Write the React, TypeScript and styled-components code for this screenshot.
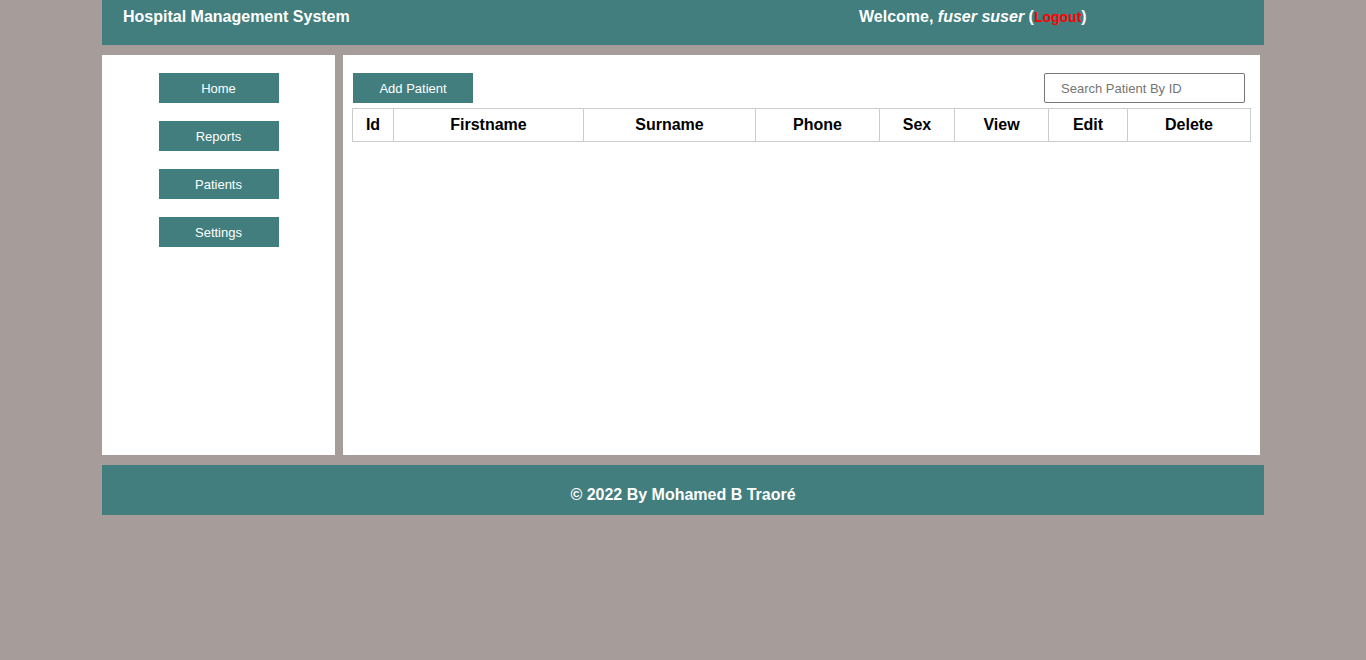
import React from "react";
import styled, { createGlobalStyle } from "styled-components";

const teal = "#417e7d";

const Global = createGlobalStyle`
  html, body {
    margin: 0;
    padding: 0;
    background: #a69d9b;
    font-family: "Liberation Sans", Arial, sans-serif;
  }
`;

const Page = styled.div`
  width: 1162px;
  margin: 0 auto;
  display: flex;
  flex-direction: column;
`;

const Header = styled.header`
  height: 45px;
  background: ${teal};
  display: grid;
  grid-template-columns: 736px 1fr;
  padding: 8px 21px 0;
  box-sizing: border-box;
  color: #fff;
  font-weight: bold;
  font-size: 16px;
  line-height: 18px;
`;

const Title = styled.div``;

const Welcome = styled.div`
  em {
    font-style: italic;
  }
`;

const Logout = styled.a`
  color: #ff0000;
  font-size: 14px;
  text-decoration: none;
`;

const Body = styled.div`
  display: flex;
  gap: 8px;
  margin-top: 10px;
  height: 400px;
`;

const Sidebar = styled.nav`
  width: 233px;
  background: #fff;
  display: flex;
  flex-direction: column;
  align-items: center;
  gap: 18px;
  padding-top: 18px;
  box-sizing: border-box;
`;

const TealButton = styled.button`
  width: 120px;
  height: 30px;
  border: none;
  background: ${teal};
  color: #fff;
  font-family: "Liberation Sans", Arial, sans-serif;
  font-size: 13px;
  padding: 0;
  cursor: pointer;
`;

const Main = styled.main`
  width: 917px;
  background: #fff;
  padding: 18px 9px;
  box-sizing: border-box;
`;

const Toolbar = styled.div`
  display: flex;
  justify-content: space-between;
  align-items: center;
  padding-left: 1px;
  padding-right: 6px;
  margin-bottom: 5px;
`;

const Search = styled.input`
  width: 201px;
  height: 30px;
  box-sizing: border-box;
  border: 1px solid #767676;
  border-radius: 2px;
  padding: 0 16px;
  font-family: "Liberation Sans", Arial, sans-serif;
  font-size: 13px;
  color: #333;
  &::placeholder {
    color: #757575;
  }
`;

const Table = styled.table`
  width: 898px;
  border-collapse: collapse;
  table-layout: fixed;
`;

const Th = styled.th`
  border: 1px solid #ccc;
  height: 33px;
  box-sizing: border-box;
  padding: 0;
  font-size: 16px;
  font-weight: bold;
  color: #000;
  text-align: center;
`;

const Footer = styled.footer`
  margin-top: 10px;
  height: 50px;
  background: ${teal};
  color: #fff;
  font-weight: bold;
  font-size: 16px;
  text-align: center;
  line-height: 18px;
  padding-top: 21px;
  box-sizing: border-box;
`;

const columns: [string, number][] = [
  ["Id", 41],
  ["Firstname", 190],
  ["Surname", 172],
  ["Phone", 124],
  ["Sex", 75],
  ["View", 94],
  ["Edit", 79],
  ["Delete", 123],
];

export default function App() {
  return (
    <>
      <Global />
      <Page>
        <Header>
          <Title>Hospital Management System</Title>
          <Welcome>
            Welcome, <em>fuser suser</em> (<Logout href="#">Logout</Logout>)
          </Welcome>
        </Header>
        <Body>
          <Sidebar>
            <TealButton>Home</TealButton>
            <TealButton>Reports</TealButton>
            <TealButton>Patients</TealButton>
            <TealButton>Settings</TealButton>
          </Sidebar>
          <Main>
            <Toolbar>
              <TealButton>Add Patient</TealButton>
              <Search placeholder="Search Patient By ID" />
            </Toolbar>
            <Table>
              <colgroup>
                {columns.map(([name, w]) => (
                  <col key={name} style={{ width: w }} />
                ))}
              </colgroup>
              <thead>
                <tr>
                  {columns.map(([name]) => (
                    <Th key={name}>{name}</Th>
                  ))}
                </tr>
              </thead>
            </Table>
          </Main>
        </Body>
        <Footer>© 2022 By Mohamed B Traoré</Footer>
      </Page>
    </>
  );
}
